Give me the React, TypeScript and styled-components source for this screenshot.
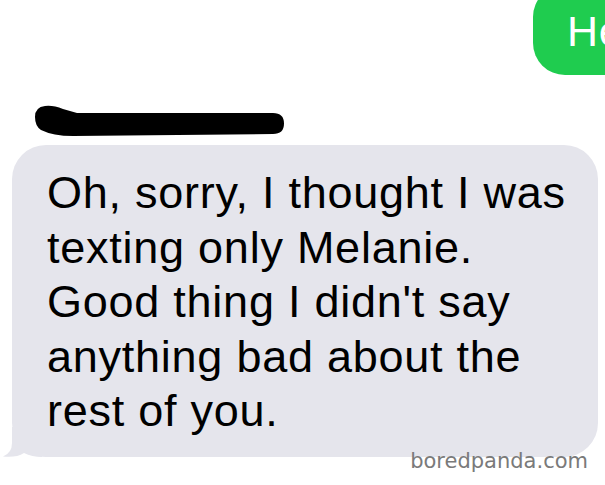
import styled, { createGlobalStyle } from "styled-components";

const GlobalStyle = createGlobalStyle`
  html, body {
    margin: 0;
    padding: 0;
    background: #ffffff;
  }
  body {
    font-family: "Liberation Sans", Arial, sans-serif;
  }
`;

const Screen = styled.div`
  position: relative;
  width: 605px;
  height: 485px;
  overflow: hidden;
  background: #ffffff;
  display: flex;
  flex-direction: column;
`;

const SentRow = styled.div`
  display: flex;
  justify-content: flex-end;
  margin-top: -15px;
  margin-right: -60px;
`;

const SentBubble = styled.div`
  width: 132px;
  height: 90px;
  box-sizing: border-box;
  padding: 24px 0 0 34px;
  border-radius: 32px;
  background: #1fcc4f;
  color: #ffffff;
  font-size: 43px;
  line-height: 44px;
  letter-spacing: 0.8px;
`;

const Redaction = styled.svg`
  display: block;
  margin: 28px 0 0 33px;
`;

const ReceivedBubble = styled.div`
  position: relative;
  margin: 6px 7px 0 12px;
  padding: 21px 10px 18px 35px;
  border-radius: 34px;
  background: #e5e5ec;
  color: #000000;
  font-size: 45px;
  line-height: 54.5px;
  letter-spacing: 0.75px;
  white-space: nowrap;
`;

const Tail = styled.svg`
  position: absolute;
  left: -10px;
  bottom: 0;
`;

const Watermark = styled.div`
  position: absolute;
  right: 17px;
  bottom: 12px;
  font-family: "DejaVu Sans", Verdana, sans-serif;
  font-size: 21px;
  color: #7a7a7a;
`;

export default function App() {
  return (
    <>
      <GlobalStyle />
      <Screen>
        <SentRow>
          <SentBubble>He</SentBubble>
        </SentRow>
        <Redaction width="256" height="36" viewBox="0 0 256 36">
          <path
            d="M12 3 Q20 2 30 6 L44 10 L240 10 Q251 10 251 20.5 Q251 31 240 31 L40 33 Q20 33 8 27 Q2 23 2 14 Q2 4 12 3 Z"
            fill="#000"
          />
        </Redaction>
        <ReceivedBubble>
          <Tail width="40" height="30" viewBox="0 0 40 30">
            <path
              d="M10 0 L10 16 Q10 26 1 29.5 Q14 31 22 26 Q30 30 40 30 L40 0 Z"
              fill="#e5e5ec"
            />
          </Tail>
          Oh, sorry, I thought I was
          <br />
          texting only Melanie.
          <br />
          Good thing I didn't say
          <br />
          anything bad about the
          <br />
          rest of you.
        </ReceivedBubble>
        <Watermark>boredpanda.com</Watermark>
      </Screen>
    </>
  );
}
